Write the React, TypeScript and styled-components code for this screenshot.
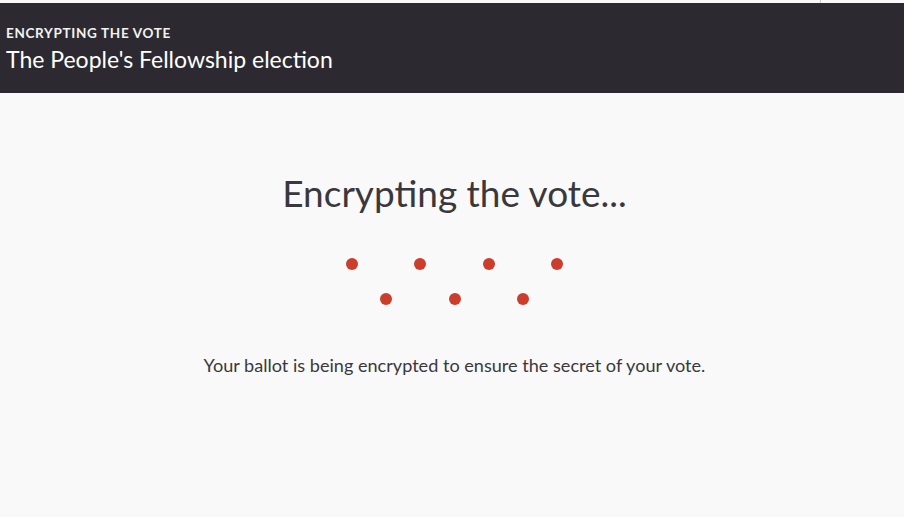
import React from "react";
import styled, { createGlobalStyle } from "styled-components";

const Global = createGlobalStyle`
  html, body { margin: 0; padding: 0; background: #f9f9f9; }
  body { font-family: "Lato", "Open Sans", sans-serif; }
  #root { min-height: 517px; }
`;

const Page = styled.div`
  display: flex;
  flex-direction: column;
  min-height: 517px;
  background: #f9f9f9;
`;

const TopStrip = styled.div`
  height: 3px;
  display: flex;
  background: #f9f9f9;
`;

const StripSpacer = styled.div`
  width: 820px;
  border-right: 1px solid #c8c8c8;
`;

const Header = styled.header`
  background: #2c2a30;
  height: 90px;
  padding: 22px 6px 0;
  box-sizing: border-box;
  display: flex;
  flex-direction: column;
  color: #ffffff;
`;

const Kicker = styled.div`
  font-size: 13.5px;
  font-weight: 700;
  letter-spacing: 0.05em;
  text-transform: uppercase;
  line-height: 17px;
  color: #f2f2f2;
`;

const Title = styled.h1`
  margin: 3px 0 0;
  font-size: 23px;
  font-weight: 400;
  line-height: 29px;
  color: #ffffff;
`;

const Main = styled.main`
  flex: 1;
  display: flex;
  flex-direction: column;
  align-items: center;
  padding: 77px 0 0 5px;
  color: #3a383c;
`;

const Heading = styled.h2`
  margin: 0;
  font-size: 37px;
  font-weight: 400;
  line-height: 46px;
`;

const Dots = styled.div`
  margin-top: 42px;
  display: grid;
  grid-template-columns: repeat(7, 12px);
  grid-template-rows: 12px 12px;
  column-gap: 22.2px;
  row-gap: 23px;
`;

const Dot = styled.span<{ $col: number; $row: number }>`
  grid-column: ${(p) => p.$col};
  grid-row: ${(p) => p.$row};
  width: 12px;
  height: 12px;
  border-radius: 50%;
  background: #cc3d2c;
`;

const Message = styled.p`
  margin: 48px 0 0;
  font-size: 18.1px;
  line-height: 24px;
  color: #3a383c;
`;

const dots = [
  { c: 1, r: 1 },
  { c: 3, r: 1 },
  { c: 5, r: 1 },
  { c: 7, r: 1 },
  { c: 2, r: 2 },
  { c: 4, r: 2 },
  { c: 6, r: 2 },
];

export default function App() {
  return (
    <>
      <Global />
      <Page>
        <TopStrip>
          <StripSpacer />
        </TopStrip>
        <Header>
          <Kicker>Encrypting the vote</Kicker>
          <Title>The People's Fellowship election</Title>
        </Header>
        <Main>
          <Heading>Encrypting the vote...</Heading>
          <Dots>
            {dots.map((d, i) => (
              <Dot key={i} $col={d.c} $row={d.r} />
            ))}
          </Dots>
          <Message>
            Your ballot is being encrypted to ensure the secret of your vote.
          </Message>
        </Main>
      </Page>
    </>
  );
}
